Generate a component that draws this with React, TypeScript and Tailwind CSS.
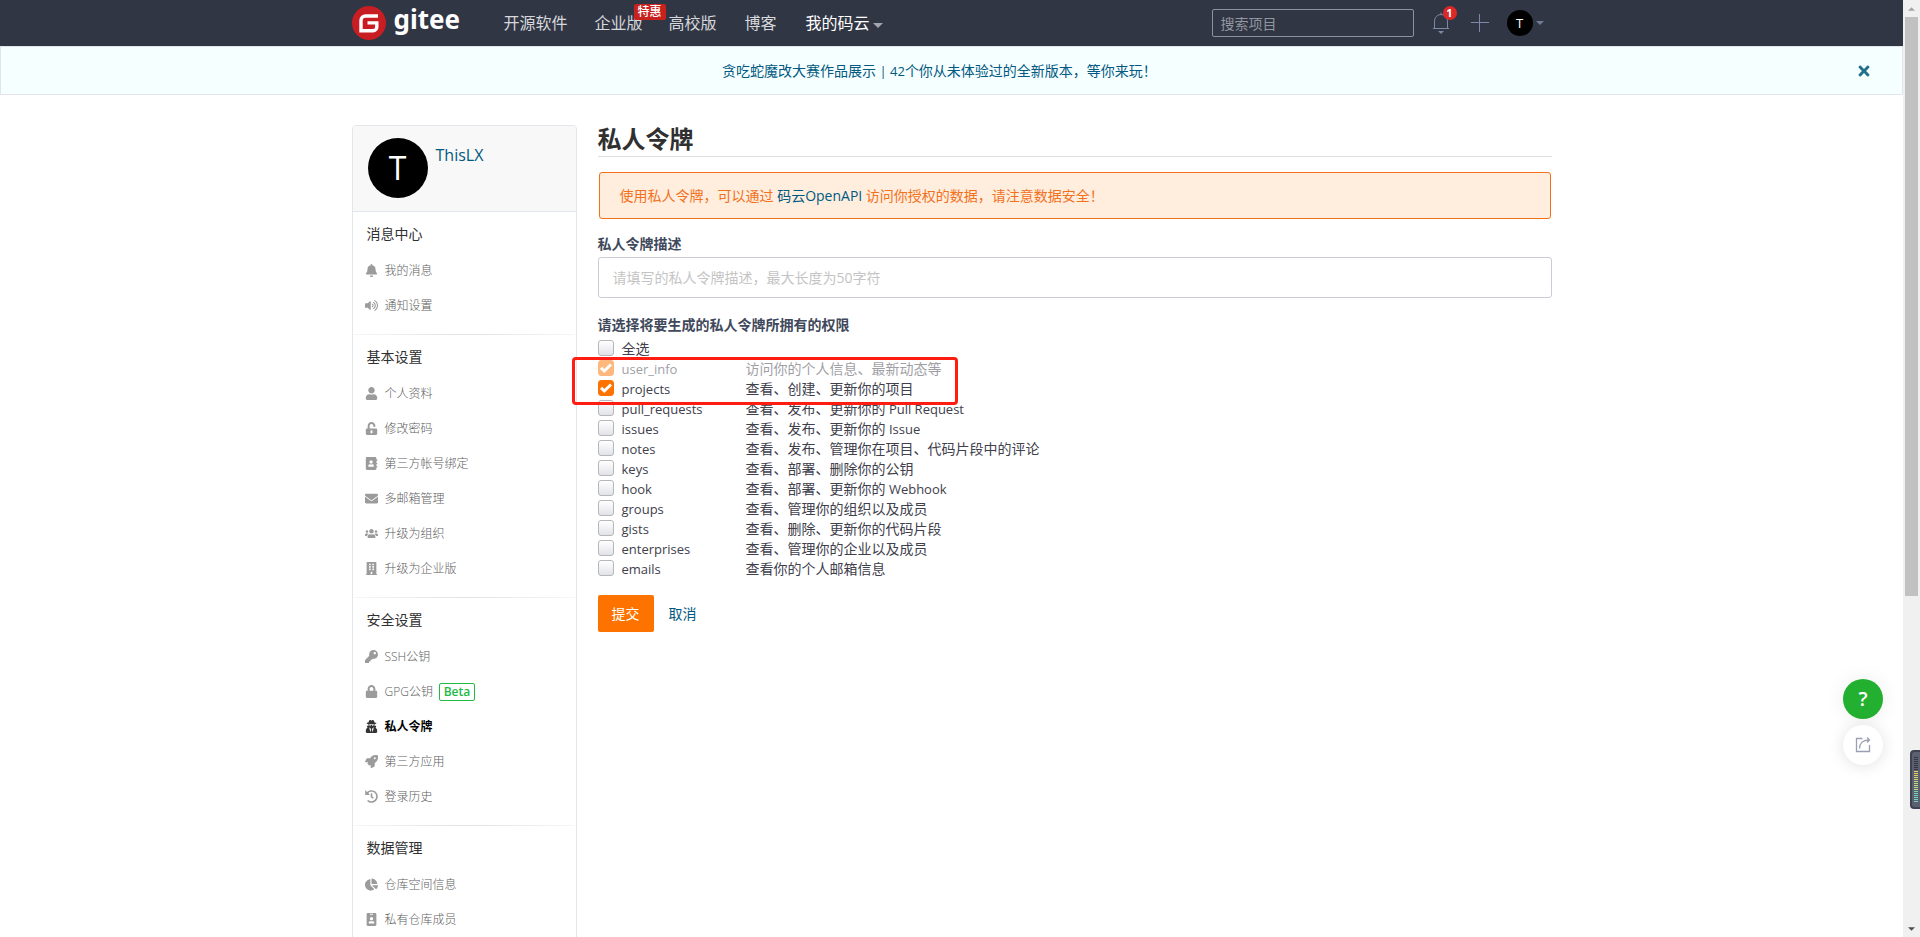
import React from "react";
import {
  FaAddressBook,
  FaBell,
  FaBuilding,
  FaChartPie,
  FaEnvelope,
  FaHistory,
  FaIdBadge,
  FaKey,
  FaLock,
  FaRocket,
  FaTimes,
  FaUnlockAlt,
  FaUser,
  FaUserSecret,
  FaUsers,
  FaVolumeUp,
} from "react-icons/fa";
import type { IconType } from "react-icons";

type Item = { label: string; icon: IconType; beta?: boolean; active?: boolean };

const sections: { title: string; items: Item[] }[] = [
  {
    title: "消息中心",
    items: [
      { label: "我的消息", icon: FaBell },
      { label: "通知设置", icon: FaVolumeUp },
    ],
  },
  {
    title: "基本设置",
    items: [
      { label: "个人资料", icon: FaUser },
      { label: "修改密码", icon: FaUnlockAlt },
      { label: "第三方帐号绑定", icon: FaAddressBook },
      { label: "多邮箱管理", icon: FaEnvelope },
      { label: "升级为组织", icon: FaUsers },
      { label: "升级为企业版", icon: FaBuilding },
    ],
  },
  {
    title: "安全设置",
    items: [
      { label: "SSH公钥", icon: FaKey },
      { label: "GPG公钥", icon: FaLock, beta: true },
      { label: "私人令牌", icon: FaUserSecret, active: true },
      { label: "第三方应用", icon: FaRocket },
      { label: "登录历史", icon: FaHistory },
    ],
  },
  {
    title: "数据管理",
    items: [
      { label: "仓库空间信息", icon: FaChartPie },
      { label: "私有仓库成员", icon: FaIdBadge },
    ],
  },
];

type Scope = { name: string; text: string; term?: string; checked?: boolean; disabled?: boolean };

const scopes: Scope[] = [
  { name: "user_info", text: "访问你的个人信息、最新动态等", checked: true, disabled: true },
  { name: "projects", text: "查看、创建、更新你的项目", checked: true },
  { name: "pull_requests", text: "查看、发布、更新你的", term: "Pull Request" },
  { name: "issues", text: "查看、发布、更新你的", term: "Issue" },
  { name: "notes", text: "查看、发布、管理你在项目、代码片段中的评论" },
  { name: "keys", text: "查看、部署、删除你的公钥" },
  { name: "hook", text: "查看、部署、更新你的", term: "Webhook" },
  { name: "groups", text: "查看、管理你的组织以及成员" },
  { name: "gists", text: "查看、删除、更新你的代码片段" },
  { name: "enterprises", text: "查看、管理你的企业以及成员" },
  { name: "emails", text: "查看你的个人邮箱信息" },
];

function Caret({ className }: { className: string }) {
  return (
    <svg viewBox="0 0 10 5" className={className} fill="currentColor" aria-hidden="true">
      <path d="M0 0h10L5 5z" />
    </svg>
  );
}

function Header() {
  return (
    <header className="h-[46px] bg-[#313644] text-[#d6d8dc]">
      <div className="mx-auto flex h-full max-w-[1200px] items-center">
        <a href="#" aria-label="gitee" className="flex h-full w-[110px] items-center">
          <svg viewBox="0 0 34 34" className="h-[34px] w-[34px]" aria-hidden="true">
            <circle cx="17" cy="17" r="17" fill="#c71d23" />
            <path
              d="M26 10H13.500a4.500 4.500 0 0 0-4.500 4.500v10.200h12.200a3.600 3.600 0 0 0 3.600-3.600v-4.200H15.500"
              fill="none"
              stroke="#fff"
              strokeWidth="3.400"
            />
          </svg>
          <span className="ml-2 pb-2 font-['Noto_Sans'] text-[26px] leading-8 font-bold text-white">gitee</span>
        </a>
        <nav className="ml-[42px] flex items-center text-base leading-6">
          <a href="#" className="mr-[27px]">开源软件</a>
          <a href="#" className="relative mr-[26px]">
            企业版
            <span className="absolute -top-[7px] left-[39px] w-8 rounded-[2px] bg-[#c9211e] text-center text-xs leading-4 font-medium whitespace-nowrap text-white">
              特惠
            </span>
          </a>
          <a href="#" className="mr-7">高校版</a>
          <a href="#" className="mr-[29px]">博客</a>
          <a href="#" className="flex items-center gap-[3px] text-white">
            我的码云
            <Caret className="mt-1 h-[5px] w-[10px] text-[#a3a6ae]" />
          </a>
        </nav>
        <div className="ml-auto flex items-center">
          <input
            aria-label="搜索项目"
            placeholder="搜索项目"
            className="h-7 w-[202px] rounded-[2px] border border-[#8c92a4] bg-transparent px-2 text-sm text-white outline-none placeholder:text-[#9296a0]"
          />
          <button type="button" aria-label="通知" className="relative ml-[18px]">
            <svg viewBox="0 0 18 22" className="h-[22px] w-[18px]" fill="none" stroke="#7d87a6" aria-hidden="true">
              <path d="M1 16.500h16M2.500 16.500V9a6.500 6.500 0 0 1 13 0v7.500M9 2.500V.5" />
              <path d="M6 19h6L9 22z" fill="#7d87a6" stroke="none" />
            </svg>
            <span className="absolute -top-[6px] left-[11px] h-[14px] w-[14px] rounded-full bg-[#db2828] text-[11px] leading-[14px] font-bold text-white">
              1
            </span>
          </button>
          <button type="button" aria-label="新建" className="ml-[21px]">
            <svg viewBox="0 0 18 18" className="h-[18px] w-[18px]" stroke="#7d87a6" aria-hidden="true">
              <path d="M0 8.500h18M8.500 0v18" />
            </svg>
          </button>
          <button type="button" aria-label="账户" className="mr-2 ml-[18px] flex items-center gap-[3px]">
            <span className="h-[26px] w-[26px] rounded-full bg-black text-center text-[13px] leading-[26px] text-white">T</span>
            <Caret className="h-1 w-2 text-[#717a97]" />
          </button>
        </div>
      </div>
    </header>
  );
}

function Sidebar() {
  return (
    <aside className="w-[225px] shrink-0 rounded-t-[4px] border border-[#e3e7ec]">
      <div className="flex h-[86px] gap-2 rounded-t-[4px] border-b border-[#e0e6ec] bg-[#f8f8f8] pt-3 pl-[15px]">
        <span className="h-[60px] w-[60px] rounded-full bg-black text-center text-[32px] leading-[60px] text-white">T</span>
        <a href="#" className="mt-[5px] text-base leading-6 text-[#005980]">ThisLX</a>
      </div>
      {sections.map((s, i) => (
        <section key={s.title}>
          {i > 0 && <div className="mx-px h-px bg-linear-to-r from-[#f6f6f6] via-[#e2e2e2] to-[#f6f6f6]" />}
          <h2 className="h-[41px] pt-[11px] pl-[14px] text-sm leading-[22px] text-[#303030]">{s.title}</h2>
          <ul className="pb-[11px]">
            {s.items.map(({ label, icon: Icon, beta, active }) => (
              <li key={label}>
                <a
                  href="#"
                  className={
                    active
                      ? "flex h-[35px] items-center pl-3 text-xs font-bold text-black"
                      : "flex h-[35px] items-center pl-3 text-xs font-light text-[#606060]"
                  }
                >
                  <span className={active ? "flex w-[14px] justify-center text-[#333]" : "flex w-[14px] justify-center text-[#9b9b9b]"}>
                    <Icon size={13} />
                  </span>
                  <span className="ml-[6px]">{label}</span>
                  {beta && (
                    <span className="ml-[6px] w-9 rounded-[2px] border border-[#21ba45] text-center text-xs leading-4 font-semibold text-[#21ba45]">
                      Beta
                    </span>
                  )}
                </a>
              </li>
            ))}
          </ul>
        </section>
      ))}
    </aside>
  );
}

function ScopeBox({ id, checked, disabled }: { id: string; checked?: boolean; disabled?: boolean }) {
  return (
    <span className="relative mr-2 h-4 w-4 shrink-0">
      <input
        id={id}
        type="checkbox"
        defaultChecked={checked}
        disabled={disabled}
        className="peer block h-4 w-4 appearance-none rounded-[3px] border border-[#b4b6ba] bg-linear-to-b from-white to-[#e2e3e8] checked:border-[#fe7300] checked:from-[#fe7300] checked:to-[#fe7300]"
      />
      <svg
        viewBox="0 0 16 16"
        className="pointer-events-none absolute inset-0 hidden h-4 w-4 peer-checked:block"
        fill="none"
        stroke="#fff"
        strokeWidth="3"
        aria-hidden="true"
      >
        <path d="M3 7.800l3.300 3.200L13 4.500" />
      </svg>
    </span>
  );
}

function ScopeRow({ name, text, term, checked, disabled }: Scope) {
  return (
    <label htmlFor={name} className={disabled ? "flex h-5 items-center opacity-50" : "flex h-5 items-center"}>
      <ScopeBox id={name} checked={checked} disabled={disabled} />
      <span className="w-[124px] pt-[2px] text-[13px]">{name}</span>
      <span className="pt-[2px]">
        {text}
        {term && <span className="text-[13px]"> {term}</span>}
      </span>
    </label>
  );
}

function Main() {
  return (
    <main className="min-w-0 flex-1 text-sm">
      <h1 className="h-8 border-b border-[#e0e0e0] text-2xl leading-7 font-bold text-[#303030]">私人令牌</h1>
      <div className="mx-px mt-[15px] flex h-[47px] items-center rounded-[3px] border border-[#f2711c] bg-[#ffedde] px-5 text-[#f2711c]">
        <p>
          使用私人令牌，可以通过 <a href="#" className="text-[#005980]">码云OpenAPI</a> 访问你授权的数据，请注意数据安全！
        </p>
      </div>
      <form>
        <label htmlFor="token-note" className="mt-[14px] block leading-[22px] font-bold text-[#40485b]">私人令牌描述</label>
        <input
          id="token-note"
          placeholder="请填写的私人令牌描述，最大长度为50字符"
          className="mt-[2px] block h-[41px] w-full rounded-[3px] border border-[#ccccd6] px-[14px] outline-none placeholder:text-[#c4c4c4]"
        />
        <fieldset className="text-[#40404c]">
          <legend className="pt-4 pb-[2px] leading-[22px] font-bold text-[#40485b]">请选择将要生成的私人令牌所拥有的权限</legend>
          <label htmlFor="all" className="flex h-5 items-center">
            <ScopeBox id="all" />
            <span className="pt-[2px]">全选</span>
          </label>
          <div className="relative">
            {scopes.map((s) => (
              <ScopeRow key={s.name} {...s} />
            ))}
            <div className="pointer-events-none absolute -top-px -left-[26px] h-12 w-[386px] rounded-[4px] border-[3px] border-[#ff1d12]" />
          </div>
        </fieldset>
        <div className="mt-[17px] flex items-center gap-[15px]">
          <button type="submit" className="h-[37px] w-14 rounded-[2px] bg-[#fe7300] text-white">提交</button>
          <a href="#" className="text-[#005980]">取消</a>
        </div>
      </form>
    </main>
  );
}

function FloatingTools() {
  return (
    <div className="absolute right-5 bottom-[172px] flex flex-col gap-[6px]">
      <button
        type="button"
        aria-label="帮助"
        className="h-10 w-10 rounded-full bg-[#23b030] text-[20px] leading-10 font-semibold text-white shadow-[0_0_20px_rgba(0,0,0,0.08)]"
      >
        ?
      </button>
      <button
        type="button"
        aria-label="分享"
        className="flex h-10 w-10 items-center justify-center rounded-full bg-white shadow-[0_1px_16px_rgba(0,0,0,0.12)]"
      >
        <svg viewBox="0 0 16 16" className="h-4 w-4" fill="none" stroke="#9a9fb3" strokeWidth="1.300" aria-hidden="true">
          <path d="M7.500 1.500H1.500v13h13V8M4.500 11.500c0-5 3-8.500 9.500-8.500M12 .5L14.500 3 12 5.500" />
        </svg>
      </button>
    </div>
  );
}

function ScrollRail() {
  return (
    <div className="relative flex w-[17px] shrink-0 flex-col items-center bg-[#f0f0f0]" aria-hidden="true">
      <div className="flex h-[17px] items-center">
        <Caret className="h-1 w-[7px] rotate-180 text-[#a3a3a3]" />
      </div>
      <div className="h-[579px] w-[13px] bg-[#c1c1c1]" />
      <div className="mt-auto flex h-[17px] items-center">
        <Caret className="h-1 w-[7px] text-[#505050]" />
      </div>
      <div className="absolute right-0 bottom-[128px] h-[59px] w-[10px] rounded-l-[4px] border-2 border-r-0 border-[#3f4250] bg-[#5b6070] pt-[5px] pl-[2px]">
        <div className="flex w-1 flex-col gap-px">
          {Array.from({ length: 23 }, (_, i) => (
            <div
              key={i}
              className={i < 7 ? "h-px bg-[#33353f]" : i < 12 ? "h-px bg-[#e5cf6b]" : i < 17 ? "h-px bg-[#bfdc85]" : "h-px bg-[#72d6b8]"}
            />
          ))}
        </div>
      </div>
    </div>
  );
}

export default function App() {
  return (
    <div className="flex h-screen overflow-hidden bg-white font-['Open_Sans','Noto_Sans_CJK_SC',sans-serif]">
      <div className="relative min-w-0 flex-1 overflow-hidden">
        <Header />
        <div className="flex h-[49px] items-center border border-[#e0e6ea] bg-[#f6ffff] text-sm text-[#005980]">
          <a href="#" className="ml-auto pl-[22px]">
            贪吃蛇魔改大赛作品展示<span className="text-[13px]"> | 42</span>个你从未体验过的全新版本，等你来玩！
          </a>
          <button type="button" aria-label="关闭" className="mr-[30px] ml-auto text-[#21708a]">
            <FaTimes size={16} />
          </button>
        </div>
        <div className="mx-auto mt-[30px] flex max-w-[1200px] items-start gap-[21px]">
          <Sidebar />
          <Main />
        </div>
        <FloatingTools />
      </div>
      <ScrollRail />
    </div>
  );
}
